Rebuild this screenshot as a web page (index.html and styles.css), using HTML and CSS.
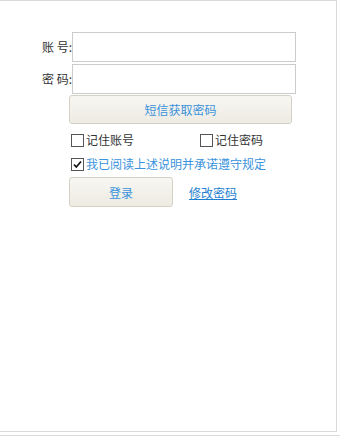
FILE: index.html
```html
<!DOCTYPE html>
<html lang="zh-CN">
<head>
  <meta charset="UTF-8">
  <title>登录</title>
  <link rel="stylesheet" href="styles.css">
</head>
<body>

  <div class="panel">
    <div class="login-form">

      <div class="field">
        <label class="field-label">账 号:</label>
        <input class="field-input" type="text">
      </div>
      <div class="field">
        <label class="field-label">密 码:</label>
        <input class="field-input" type="password">
      </div>

      <button class="btn btn-sms">短信获取密码</button>

      <div class="check-row">
        <span class="check-item">
          <span class="box"></span>记住账号
        </span>
        <span class="check-item second">
          <span class="box"></span>记住密码
        </span>
      </div>

      <div class="check-row agree">
        <span class="check-item">
          <span class="box">
            <svg width="11" height="11" viewBox="0 0 11 11"><path d="M2 5.5 L4.3 8 L9 2.5" fill="none" stroke="#111" stroke-width="1.7"/></svg>
          </span>我已阅读上述说明并承诺遵守规定
        </span>
      </div>

      <div class="action-row">
        <button class="btn btn-login">登录</button>
        <a class="change-link" href="#">修改密码</a>
      </div>

    </div>
  </div>
  <div class="bottom-line"></div>

</body>
</html>
```

FILE: styles.css
```css
body {
  margin: 0;
  padding: 0;
  font-family: "Noto Sans CJK SC", "Noto Sans", sans-serif;
  font-size: 12px;
  color: #333;
  background: #fff;
}

.panel {
  box-sizing: border-box;
  width: 337px;
  height: 432px;
  border: 1px solid #d9d9d9;
  border-left: none;
}

.bottom-line {
  margin-top: 3px;
  border-top: 1px solid #d9d9d9;
}

.login-form {
  padding-top: 31px;
}

.field {
  display: flex;
  align-items: center;
  height: 30px;
  margin-bottom: 2px;
}

.field-label {
  width: 72px;
  text-align: right;
  color: #333;
  line-height: 30px;
}

.field-input {
  box-sizing: border-box;
  width: 224px;
  height: 30px;
  margin: 0;
  border: 1px solid #cccccc;
  outline: none;
}

.btn {
  box-sizing: border-box;
  font-family: inherit;
  font-size: 12px;
  color: #3a93dc;
  border: 1px solid #d3d1c3;
  border-radius: 3px;
  background: linear-gradient(to bottom, #f7f6f1, #edebe2);
  box-shadow: inset 0 0 1px #fff;
  cursor: pointer;
  padding: 0;
}

.btn-sms {
  display: block;
  width: 223px;
  height: 29px;
  margin: -1px 0 0 69px;
}

.check-row {
  display: flex;
  align-items: center;
  height: 14px;
  margin: 9px 0 0 71px;
}

.check-row.agree {
  margin-top: 10px;
  color: #3a93dc;
}

.check-item {
  display: flex;
  align-items: center;
  line-height: 14px;
}

.check-item.second {
  margin-left: 66px;
}

.box {
  box-sizing: border-box;
  display: flex;
  align-items: center;
  justify-content: center;
  width: 13px;
  height: 13px;
  margin-right: 2px;
  border: 1px solid #555;
  background: #fff;
}

.action-row {
  display: flex;
  align-items: center;
  margin: 6px 0 0 69px;
}

.btn-login {
  width: 104px;
  height: 30px;
}

.change-link {
  margin-left: 16px;
  color: #1e7fd0;
  text-decoration: underline;
}
```
